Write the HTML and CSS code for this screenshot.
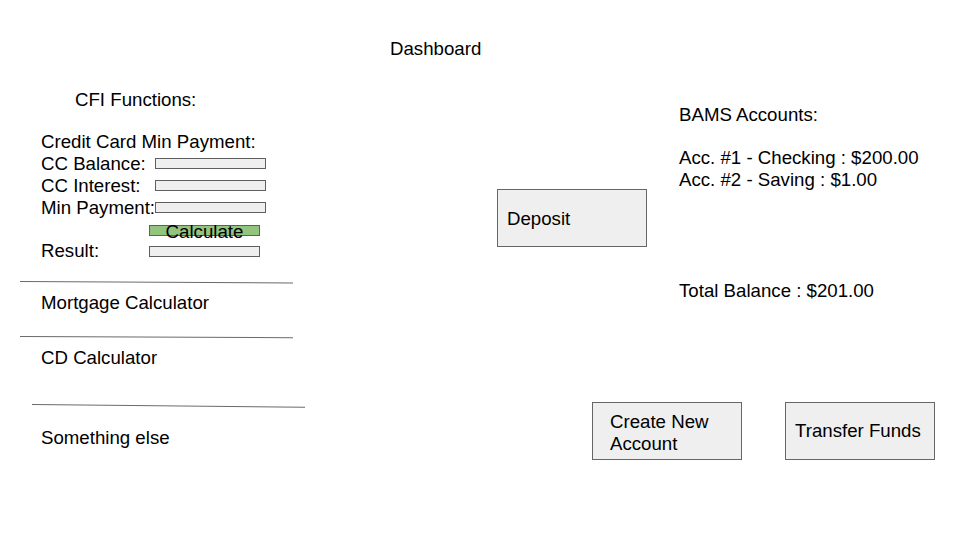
FILE: index.html
```html
<!DOCTYPE html>
<html lang="en">
<head>
<meta charset="utf-8">
<title>Dashboard</title>
<link rel="stylesheet" href="styles.css">
</head>
<body>
<div class="slide">
  <div class="title">Dashboard</div>
  <div class="main">
    <section class="left">
      <div class="cfi-heading">CFI Functions:</div>
      <div class="cc-heading">Credit Card Min Payment:</div>
      <div class="row"><span class="label">CC Balance:</span><span class="field"></span></div>
      <div class="row"><span class="label">CC Interest:</span><span class="field"></span></div>
      <div class="row"><span class="label">Min Payment:</span><span class="field"></span></div>
      <div class="row"><span class="label short"></span><span class="field low calc">Calculate</span></div>
      <div class="row"><span class="label short">Result:</span><span class="field low"></span></div>
      <div class="rule rule-1"></div>
      <div class="item item-mortgage">Mortgage Calculator</div>
      <div class="rule rule-2"></div>
      <div class="item item-cd">CD Calculator</div>
      <div class="rule rule-3"></div>
      <div class="item item-else">Something else</div>
    </section>
    <section class="right">
      <div class="top-row">
        <div class="btn deposit">Deposit</div>
        <div class="accounts">
          <div class="acc-title">BAMS Accounts:</div>
          <div class="acc-list">
            <div>Acc. #1 - Checking : $200.00</div>
            <div>Acc. #2 - Saving : $1.00</div>
          </div>
          <div class="total">Total Balance : $201.00</div>
        </div>
      </div>
      <div class="btn-row">
        <div class="btn create">Create New<br>Account</div>
        <div class="btn transfer">Transfer Funds</div>
      </div>
    </section>
  </div>
</div>
</body>
</html>
```

FILE: styles.css
```css
html, body {
  margin: 0;
  padding: 0;
  background: #ffffff;
}

.slide {
  width: 960px;
  height: 540px;
  overflow: hidden;
  box-sizing: border-box;
  padding-top: 37.6px;
  font-family: "Liberation Sans", Arial, sans-serif;
  font-size: 18.67px;
  line-height: 21.8px;
  color: #000000;
}

.title {
  margin-left: 390px;
  height: 21.8px;
}

.main {
  display: flex;
}

/* left column */
.left {
  width: 285px;
  margin-left: 20px;
  display: flex;
  flex-direction: column;
}

.cfi-heading {
  margin-top: 30px;
  padding-left: 55px;
}

.cc-heading {
  margin-top: 20.2px;
  padding-left: 21px;
}

.row {
  display: flex;
  height: 21.8px;
  padding-left: 21px;
}

.label {
  width: 114px;
  flex: none;
  white-space: nowrap;
}

.label.short {
  width: 108px;
}

.field {
  box-sizing: border-box;
  width: 111px;
  height: 11px;
  margin-top: 5px;
  background: #efefef;
  border: 1px solid #5f5f5f;
}

.field.low {
  margin-top: 6px;
}

.field.calc {
  background: #93c47d;
  text-align: center;
  line-height: 12px;
  white-space: nowrap;
}

.rule {
  width: 273px;
  height: 0;
  border-top: 1px solid #6a6a6a;
  transform-origin: left center;
}

.rule-1 {
  margin-top: 18.4px;
  transform: rotate(0.3deg);
}

.rule-2 {
  margin-top: 22.3px;
  transform: rotate(0.25deg);
}

.rule-3 {
  margin-top: 35px;
  margin-left: 11.7px;
  transform: rotate(0.6deg);
}

.item {
  padding-left: 21px;
}

.item-mortgage {
  margin-top: 10.4px;
}

.item-cd {
  margin-top: 9.9px;
}

.item-else {
  margin-top: 22.4px;
}

/* right area */
.right {
  display: flex;
  flex-direction: column;
}

.top-row {
  display: flex;
  align-items: flex-start;
}

.btn {
  box-sizing: border-box;
  width: 150px;
  height: 58px;
  background: #efefef;
  border: 1px solid #666666;
  display: flex;
  align-items: center;
}

.deposit {
  margin-left: 192px;
  margin-top: 129.8px;
  padding-left: 9px;
  padding-top: 1px;
}

.accounts {
  margin-left: 32px;
  margin-top: 44.5px;
  white-space: nowrap;
}

.acc-list {
  margin-top: 21.8px;
}

.total {
  margin-top: 88.7px;
}

.btn-row {
  display: flex;
  gap: 43px;
  margin-left: 287px;
  margin-top: 100px;
}

.create {
  padding-left: 17px;
  padding-top: 4px;
}

.transfer {
  padding-left: 9px;
}
```
